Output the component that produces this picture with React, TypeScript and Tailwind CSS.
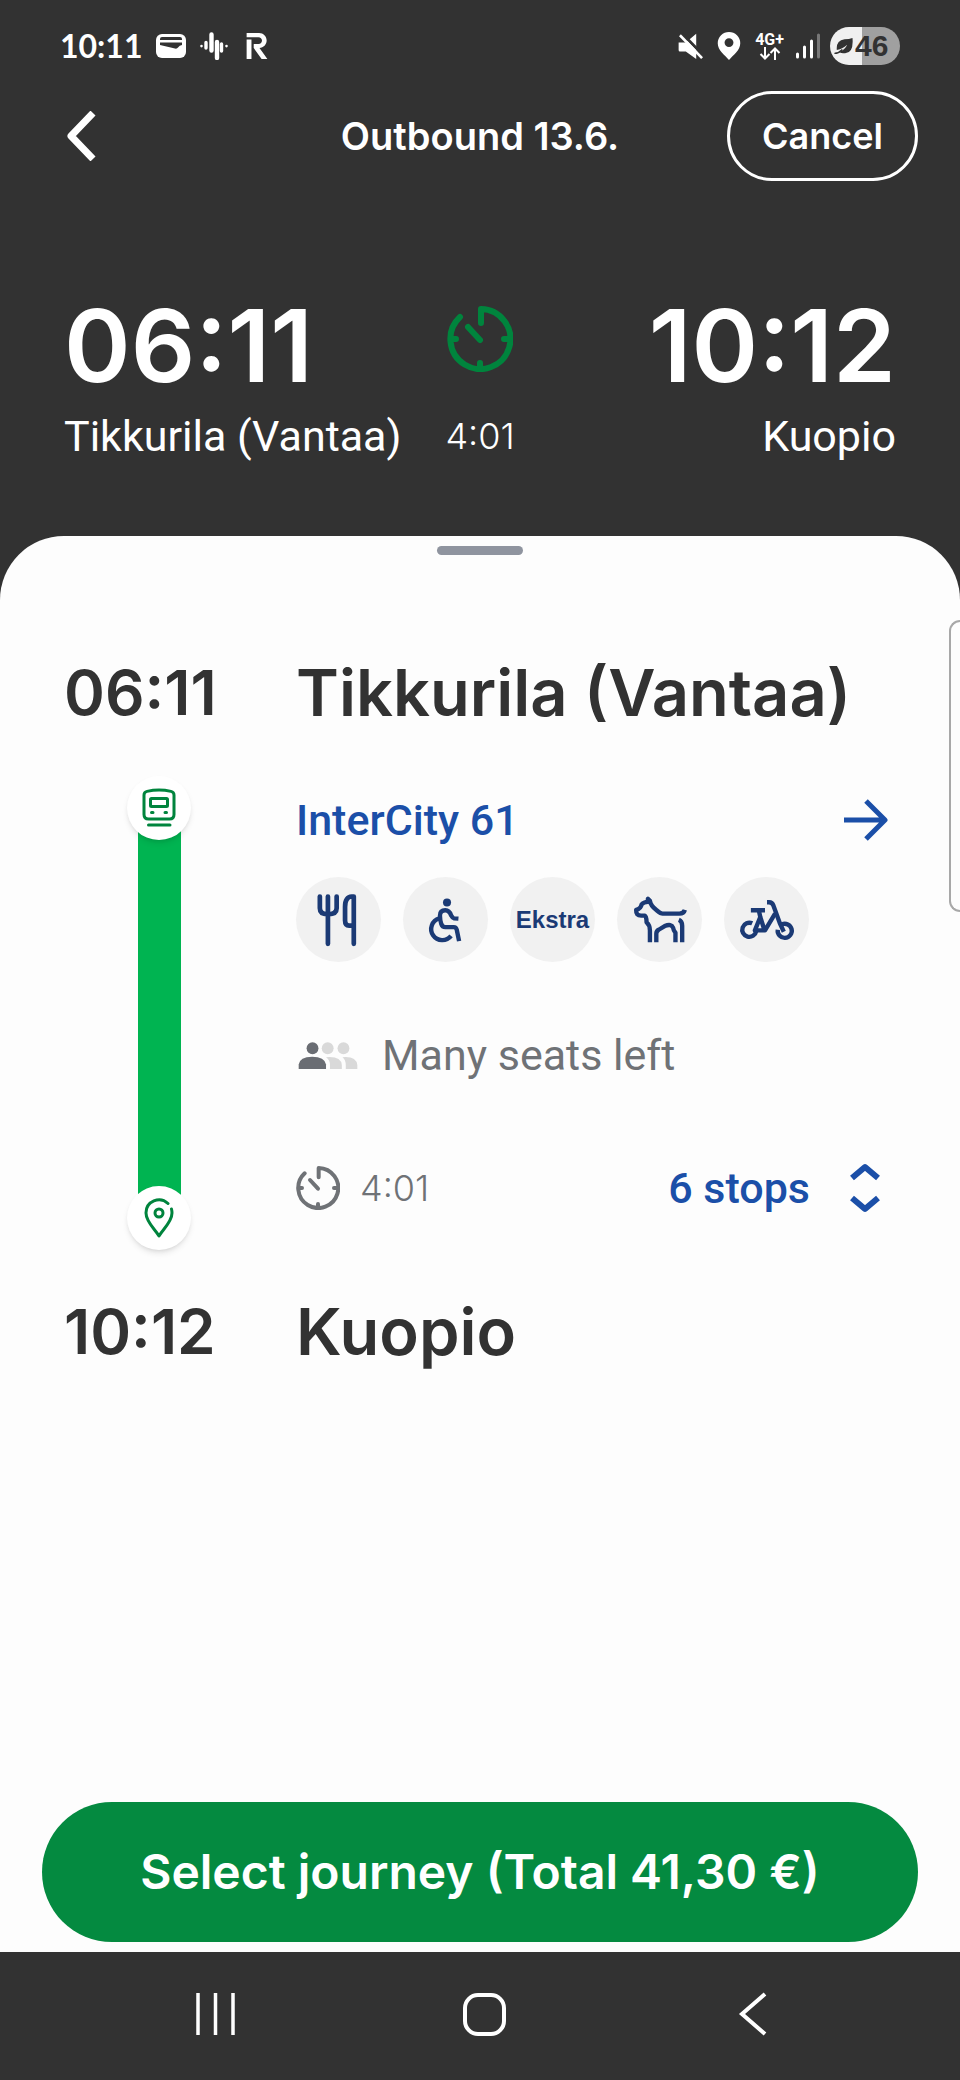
import React from 'react';
import { SiRevolut } from 'react-icons/si';

interface IconProps {
  className?: string;
}

const WalletIcon: React.FC<IconProps> = ({ className }) => (
  <svg viewBox="0 0 30 24" className={className} aria-hidden="true">
    <rect x="0" y="0" width="30" height="24" rx="6" fill="#fff" />
    <path d="M4 6V5q0-2 2-2h18q2 0 2 2v1z" fill="#323232" />
    <path d="M4 8.500h22V11q-2.500 0-4 2.500q-1 1.500-3 1L4 11z" fill="#323232" />
  </svg>
);

const WaveIcon: React.FC<IconProps> = ({ className }) => (
  <svg viewBox="0 0 28 28" className={className} stroke="#fff" strokeLinecap="round" aria-hidden="true">
    <path d="M1.500 14v.1M26.500 14v.1" strokeWidth="2.600" />
    <path d="M6 10.500v5.500M21.500 12v7" strokeWidth="3.400" />
    <path d="M11.500 2.500v16M17 10v16" strokeWidth="4.400" />
  </svg>
);

const MutedIcon: React.FC<IconProps> = ({ className }) => (
  <svg viewBox="0 0 84 86" className={className} aria-hidden="true">
    <path d="M4 32h22L58 5v78L26 60H8q-4 0-4-5z" fill="#fff" />
    <path d="M14 4l70 72" stroke="#323232" strokeWidth="9" />
    <path d="M8 10l68 70" stroke="#fff" strokeWidth="8" />
  </svg>
);

const LocationIcon: React.FC<IconProps> = ({ className }) => (
  <svg viewBox="0 0 68 82" className={className} aria-hidden="true">
    <path
      fillRule="evenodd"
      d="M34 0A33 33 0 0 0 1 33C1 54 22 68 34 82C46 68 67 54 67 33A33 33 0 0 0 34 0zM34 18a13 13 0 1 1 0 26a13 13 0 0 1 0-26z"
      fill="#fff"
    />
  </svg>
);

const DataArrowsIcon: React.FC<IconProps> = ({ className }) => (
  <svg viewBox="0 0 22 13" className={className} fill="none" stroke="#fff" strokeWidth="2" aria-hidden="true">
    <path d="M6 0v11M1.500 7L6 11.500L10.500 7M16 13V2M11.500 6L16 1.500L20.500 6" />
  </svg>
);

const SignalIcon: React.FC<IconProps> = ({ className }) => (
  <svg viewBox="0 0 24 26" className={className} strokeWidth="3" strokeLinecap="round" stroke="#fff" aria-hidden="true">
    <path d="M1.500 21v3M8.500 14v10M15.500 8v16" />
    <path d="M22.500 2v22" stroke="#777" />
  </svg>
);

const LeafIcon: React.FC<IconProps> = ({ className }) => (
  <svg viewBox="0 0 54 48" className={className} aria-hidden="true">
    <path d="M54 0Q58 44 32 46Q18 46 14 42Q32 34 38 20Q26 32 7 36Q4 8 30 4Q44 4 54 0z" fill="#323232" />
    <path d="M2 46Q12 46 22 36" stroke="#323232" strokeWidth="5" fill="none" strokeLinecap="round" />
  </svg>
);

const BackIcon: React.FC<IconProps> = ({ className }) => (
  <svg viewBox="0 0 30 50" className={className} fill="none" stroke="#fff" strokeWidth="7" aria-hidden="true">
    <path d="M27 2L5 25L27 48" strokeLinejoin="round" />
  </svg>
);

const StopwatchIcon: React.FC<IconProps> = ({ className }) => (
  <svg
    viewBox="0 0 66 66"
    className={className}
    fill="none"
    stroke="currentColor"
    strokeWidth="6"
    strokeLinecap="round"
    strokeLinejoin="round"
    aria-hidden="true"
  >
    <path d="M34 17V3A30 30 0 1 1 13 11" />
    <path d="M21 21L33 34" />
    <path d="M4 33h5M57 33h5M33 57v5" />
  </svg>
);

const TrainIcon: React.FC<IconProps> = ({ className }) => (
  <svg viewBox="0 0 34 40" className={className} fill="none" stroke="#00843d" strokeWidth="3" strokeLinecap="round" aria-hidden="true">
    <path d="M2 7Q2 4 5 3.400Q17 .8 29 3.400Q32 4 32 7V26.500Q32 31 27.500 31H6.500Q2 31 2 26.500z" />
    <rect x="8.500" y="10.500" width="17" height="8" rx="1" />
    <path d="M9.500 24.500h1.500M23 24.500h1.500M6.500 37h21.500" />
  </svg>
);

const PinIcon: React.FC<IconProps> = ({ className }) => (
  <svg viewBox="0 0 30 40" className={className} fill="none" stroke="#00843d" strokeWidth="3" strokeLinecap="round" strokeLinejoin="round" aria-hidden="true">
    <path d="M24 5.500A13 13 0 0 0 2 15C2 24 11 31 15 38C19 31 28 24 28 15Q28 13 27.500 11" />
    <circle cx="15" cy="15" r="4" />
  </svg>
);

const ArrowRightIcon: React.FC<IconProps> = ({ className }) => (
  <svg viewBox="0 0 44 42" className={className} fill="none" stroke="currentColor" strokeWidth="5" strokeLinejoin="round" aria-hidden="true">
    <path d="M0 21H40M22 2L41 21L22 40" />
  </svg>
);

const ExpandIcon: React.FC<IconProps> = ({ className }) => (
  <svg viewBox="0 0 30 50" className={className} fill="none" stroke="currentColor" strokeWidth="6" strokeLinejoin="round" aria-hidden="true">
    <path d="M2 15L15 4L28 15M2 35L15 46L28 35" />
  </svg>
);

const SeatsIcon: React.FC<IconProps> = ({ className }) => (
  <svg viewBox="0 0 180 82" className={className} aria-hidden="true">
    <g fill="#d9d9d9">
      <circle cx="89" cy="19" r="18" />
      <circle cx="137" cy="19" r="18" />
      <path d="M84 46Q130 42 132 70V82H96V70Q96 54 84 46z" />
      <path d="M134 46Q176 42 179 70V82H144V70Q144 54 134 46z" />
    </g>
    <g fill="#6a6d73">
      <circle cx="43" cy="19" r="18" />
      <path d="M1 82V68Q4 46 42 45Q80 46 84 68V82z" />
    </g>
  </svg>
);

const serviceIcon = 'size-full';

const RestaurantIcon = () => (
  <svg viewBox="20 23 253 253" className={serviceIcon} fill="none" stroke="#1b3a75" strokeWidth="14" strokeLinecap="round" aria-hidden="true">
    <path d="M91 81V116Q91 134 115 134Q141 134 141 116V81M115 81V222" />
    <path d="M192 222V81H186Q166 82 166 112V152Q166 168 178 168H190" strokeLinejoin="round" />
  </svg>
);

const WheelchairIcon = () => (
  <svg viewBox="340 23 253 253" className={serviceIcon} fill="none" stroke="#1b3a75" strokeWidth="13" aria-hidden="true">
    <circle cx="471" cy="99" r="12" fill="#1b3a75" stroke="none" />
    <path d="M505 147L492 146Q487 145 483 137Q478 122 466 122Q450 122 450 138Q450 150 454 163Q457 172 466 172H491Q498 172 500 180L507 214" />
    <path d="M448 146A33 33 0 1 0 483 198" />
  </svg>
);

const DogIcon = () => (
  <svg viewBox="20 23 253 253" className={serviceIcon} fill="none" stroke="#1b3a75" strokeWidth="13" strokeLinejoin="round" aria-hidden="true">
    <path d="M222 121Q219 132 206 132H156Q150 132 138 122Q120 108 118 94L112 88V97Q99 97 93 105Q91 117 77 121Q76 138 92 138H102Q108 140 108 158Q118 166 118 182V217" />
    <path d="M137 217V192Q137 184 144 180L162 169Q182 161 187 174Q188 182 194 189V217" />
    <path d="M204 150Q214 154 214 168V217" />
  </svg>
);

const BikeIcon = () => (
  <svg viewBox="340 23 253 253" className={serviceIcon} fill="none" stroke="#1b3a75" strokeWidth="13" strokeLinejoin="round" aria-hidden="true">
    <path d="M424 161A21 21 0 1 0 436 184" />
    <path d="M512 164A21 21 0 1 1 500 180" />
    <path d="M420 122H462M444 124L448 142L432 182H462L492 132M448 142L460 180" />
    <path d="M468 98H474Q484 98 487 108L506 160L518 186" />
  </svg>
);

const StatusBar = () => (
  <div className="flex h-[91px] items-center justify-between px-[60px] text-white">
    <div className="flex items-center">
      <span className="font-[Lato] text-[32px] font-bold leading-none">10:11</span>
      <WalletIcon className="ml-[14px] h-6 w-[30px]" />
      <WaveIcon className="ml-[14px] size-7" />
      <SiRevolut className="ml-4 size-[26px]" aria-hidden="true" />
    </div>
    <div className="flex items-center">
      <MutedIcon className="size-7" />
      <LocationIcon className="ml-3 h-7 w-6" />
      <div className="ml-[14px] flex flex-col items-center font-[Roboto]">
        <span className="text-[16px] font-bold leading-[15px]">4G+</span>
        <DataArrowsIcon className="h-[13px] w-[22px]" />
      </div>
      <SignalIcon className="ml-3 h-[26px] w-6" />
      <div className="ml-[10px] flex h-[38px] w-[70px] items-center overflow-hidden rounded-full bg-linear-to-r from-[#f0f0f0] from-46% to-[#a0a0a0] to-46% pl-1">
        <LeafIcon className="h-4 w-[19px]" />
        <span className="ml-[2px] font-['Liberation_Sans'] text-[30px] font-bold leading-none text-[#323232]">46</span>
      </div>
    </div>
  </div>
);

const Header = () => (
  <header className="grid h-[90px] grid-cols-[1fr_auto_1fr] items-center pl-[66px] pr-[42px] font-[Inter] font-semibold text-white">
    <button type="button" aria-label="Back" className="justify-self-start">
      <BackIcon className="h-[50px] w-[30px]" />
    </button>
    <h1 className="mr-6 text-[38px] leading-none">Outbound 13.6.</h1>
    <button type="button" className="h-[90px] justify-self-end rounded-full border-[3px] border-white px-8 text-[36px] leading-none">
      Cancel
    </button>
  </header>
);

const JourneySummary = () => (
  <section className="grid grid-cols-[1fr_auto_1fr] px-16 pb-[62px] pt-[111px] font-[Roboto] text-[43px] text-white">
    <div>
      <p className="font-[Inter] text-[101px] font-semibold leading-[106px]">06:11</p>
      <p className="leading-[76px]">Tikkurila (Vantaa)</p>
    </div>
    <div className="flex flex-col items-center">
      <div className="flex h-[106px] items-center pb-3 text-[#00843d]">
        <StopwatchIcon className="size-[66px]" />
      </div>
      <p className="font-[Inter] text-[36px] font-light leading-[76px]">4:01</p>
    </div>
    <div className="text-right">
      <p className="font-[Inter] text-[101px] font-semibold leading-[106px]">10:12</p>
      <p className="leading-[76px]">Kuopio</p>
    </div>
  </section>
);

interface StopRowProps {
  time: string;
  station: string;
}

const StopRow: React.FC<StopRowProps> = ({ time, station }) => (
  <div className="grid grid-cols-[232px_1fr] whitespace-nowrap font-[Inter] font-semibold leading-[80px] text-[#323232]">
    <span className="text-[62px]">{time}</span>
    <h2 className="text-[65px]">{station}</h2>
  </div>
);

const services = [
  { label: 'Restaurant', content: <RestaurantIcon /> },
  { label: 'Wheelchair access', content: <WheelchairIcon /> },
  { label: 'Ekstra', content: <span className="font-['Liberation_Sans'] text-2xl font-bold text-[#1b3a75]">Ekstra</span> },
  { label: 'Pets', content: <DogIcon /> },
  { label: 'Bicycles', content: <BikeIcon /> },
];

const Timeline = () => (
  <div className="flex w-[190px] flex-col items-center">
    <div className="z-10 flex size-16 items-center justify-center rounded-full bg-white shadow-md">
      <TrainIcon className="h-10 w-[34px]" />
    </div>
    <div className="-my-3 w-[43px] flex-1 bg-[#00b451]" />
    <div className="z-10 flex size-16 items-center justify-center rounded-full bg-white shadow-md">
      <PinIcon className="h-10 w-[30px]" />
    </div>
  </div>
);

const Leg = () => (
  <div className="grid grid-cols-[232px_1fr] pb-[42px] pt-[43px] font-[Roboto] text-[43px] leading-[60px]">
    <Timeline />
    <div className="pb-8 pt-[14px] text-[#1b4fa8]">
      <a href="#train" className="flex items-center justify-between font-medium">
        InterCity 61
        <ArrowRightIcon className="h-[42px] w-11" />
      </a>
      <ul className="mt-[27px] flex gap-[22px]">
        {services.map((service) => (
          <li key={service.label} title={service.label} className="flex size-[85px] items-center justify-center rounded-full bg-[#f1f1f1]">
            {service.content}
          </li>
        ))}
      </ul>
      <p className="mt-[63px] flex items-center gap-6 text-[#6f7276]">
        <SeatsIcon className="ml-[2px] h-[27px] w-[60px]" />
        Many seats left
      </p>
      <div className="mt-[73px] flex items-center justify-between">
        <span className="flex items-center gap-5 font-[Inter] text-[36px] font-light text-[#6f7276]">
          <StopwatchIcon className="size-11" />
          4:01
        </span>
        <button type="button" className="flex items-center gap-[40px] pr-2 font-medium">
          6 stops
          <ExpandIcon className="h-[50px] w-[30px]" />
        </button>
      </div>
    </div>
  </div>
);

const NavigationBar = () => (
  <nav className="flex h-32 items-center justify-between bg-[#323232] pb-1 pl-[196px] pr-[193px]">
    <button type="button" aria-label="Recent apps">
      <svg viewBox="0 0 39 42" className="h-[42px] w-[39px]" stroke="#fff" strokeWidth="3.500">
        <path d="M2 0v42M19.500 0v42M37 0v42" />
      </svg>
    </button>
    <button type="button" aria-label="Home" className="size-[43px] rounded-[15px] border-4 border-white" />
    <button type="button" aria-label="Back">
      <svg viewBox="-6 0 34 44" className="h-11 w-[34px]" fill="none" stroke="#fff" strokeWidth="4">
        <path d="M26 2L3 22L26 42" />
      </svg>
    </button>
  </nav>
);

const App: React.FC = () => (
  <div className="flex min-h-screen flex-col overflow-x-hidden bg-[#323232]">
    <StatusBar />
    <Header />
    <JourneySummary />
    <main className="relative flex flex-1 flex-col rounded-t-[64px] bg-[#fdfdfd]">
      <div className="mx-auto mt-[10px] h-[9px] w-[86px] rounded-full bg-[#8f949f]" />
      <div className="pl-16 pr-[72px] pt-[98px]">
        <StopRow time="06:11" station="Tikkurila (Vantaa)" />
        <Leg />
        <StopRow time="10:12" station="Kuopio" />
      </div>
      <div className="mt-auto px-[42px] pb-[10px]">
        <button type="button" className="h-[140px] w-full rounded-full bg-[#048a40] font-[Inter] text-5xl font-semibold text-white">
          Select journey (Total 41,30 €)
        </button>
      </div>
      {/* edge panel handle */}
      <div className="absolute right-0 top-[84px] h-[292px] w-[11px] rounded-l-[12px] border-2 border-r-0 border-[#a8a8a8]" />
    </main>
    <NavigationBar />
  </div>
);

export default App;
